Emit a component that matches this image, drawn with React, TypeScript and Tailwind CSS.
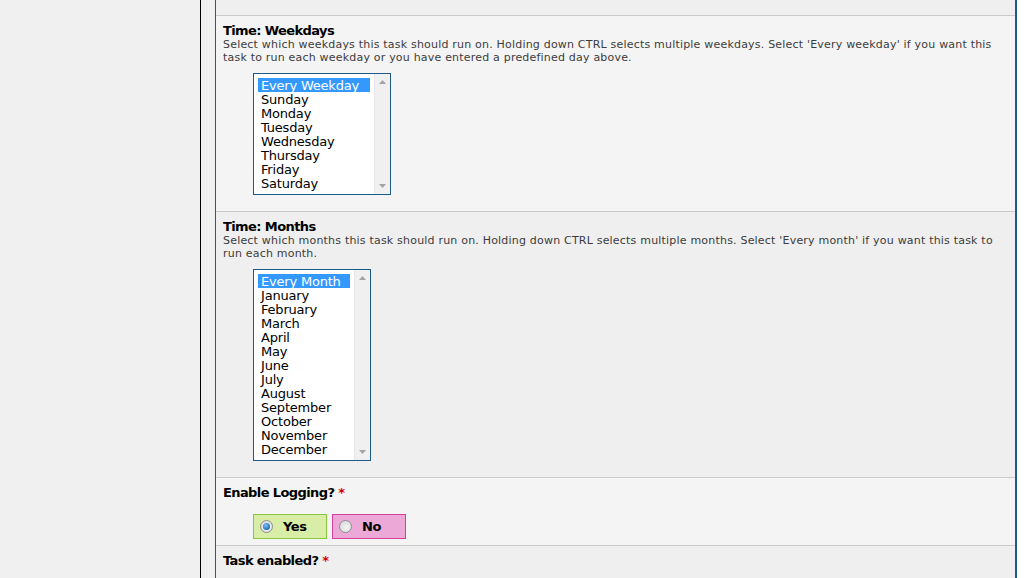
import React from 'react';

const weekdays = ['Every Weekday', 'Sunday', 'Monday', 'Tuesday', 'Wednesday', 'Thursday', 'Friday', 'Saturday'];
const months = [
  'Every Month', 'January', 'February', 'March', 'April', 'May', 'June',
  'July', 'August', 'September', 'October', 'November', 'December',
];

// Listbox drawn by hand so the old Windows look stays put
function ListBox({ items, itemWidth }: { items: string[]; itemWidth: string }) {
  return (
    <div className="ml-[30px] mt-[9px] flex w-fit border border-[#1c5a8a] bg-white">
      <div className="p-1">
        {items.map((it, i) => (
          <div
            key={it}
            className={`${itemWidth} h-[14px] pl-[3px] text-[13px] leading-[15px] tracking-[-0.2px] whitespace-nowrap ${
              i === 0 ? 'bg-[#3399ff] text-white' : 'text-black'
            }`}
          >
            {it}
          </div>
        ))}
      </div>
      <div className="flex w-4 flex-col items-center justify-between border-l border-[#e6e6e6] bg-[#f0f0f0] py-[6px]">
        <svg width="7" height="4" viewBox="0 0 7 4">
          <path d="M0 4 L3.5 0 L7 4 Z" fill="#a3a3a3" />
        </svg>
        <svg width="7" height="4" viewBox="0 0 7 4">
          <path d="M0 0 L3.5 4 L7 0 Z" fill="#a3a3a3" />
        </svg>
      </div>
    </div>
  );
}

function Radio({ checked }: { checked: boolean }) {
  return (
    <span className="flex h-[13px] w-[13px] items-center justify-center rounded-full border border-[#8e8f8f] bg-[radial-gradient(circle_at_60%_60%,#f4f4f4,#d4d4d4)]">
      {checked && (
        <span className="h-[7px] w-[7px] rounded-full bg-[radial-gradient(circle_at_40%_35%,#7ec4f5,#1f6fb1_70%,#0f4f86)]" />
      )}
    </span>
  );
}

function Label({ text, required }: { text: string; required?: boolean }) {
  return (
    <div className="text-[13px] leading-[15px] font-bold tracking-[-0.6px] text-black">
      {text}
      {required && <span className="text-[#d40000]"> *</span>}
    </div>
  );
}

export default function App() {
  return (
    <div
      className="flex h-[578px] w-[1032px] overflow-hidden bg-white"
      style={{ fontFamily: '"DejaVu Sans", Verdana, sans-serif' }}
    >
      <div className="w-[200px] shrink-0 bg-[#f0f0f0]" />
      <div className="w-px shrink-0 bg-black" />
      <div className="w-[14px] shrink-0 bg-[#f0f0f0]" />

      <div className="flex w-[802px] shrink-0 flex-col border-l border-r-2 border-[#1a5d8f]">
        <div className="h-[16px] shrink-0 border-b border-[#cacaca] bg-[#efefef]" />

        <div className="shrink-0 border-b border-[#cacaca] bg-[#f4f4f4] pt-[7px] pb-[16px] pl-[7px]">
          <Label text="Time: Weekdays" />
          <div className="text-[11px] leading-[13px] tracking-[0.2px] whitespace-nowrap text-[#3c3c3c]">
            Select which weekdays this task should run on. Holding down CTRL selects multiple weekdays. Select 'Every weekday' if you want this
            <br />
            task to run each weekday or you have entered a predefined day above.
          </div>
          <ListBox items={weekdays} itemWidth="w-[112px]" />
        </div>

        <div className="shrink-0 border-b border-[#cacaca] bg-[#efefef] pt-[7px] pb-[16px] pl-[7px]">
          <Label text="Time: Months" />
          <div className="text-[11px] leading-[13px] tracking-[0.2px] whitespace-nowrap text-[#3c3c3c]">
            Select which months this task should run on. Holding down CTRL selects multiple months. Select 'Every month' if you want this task to
            <br />
            run each month.
          </div>
          <ListBox items={months} itemWidth="w-[92px]" />
        </div>

        <div className="shrink-0 border-b border-[#cacaca] bg-[#f4f4f4] pt-[7px] pb-[6px] pl-[7px]">
          <Label text="Enable Logging?" required />
          <div className="mt-[14px] ml-[30px] flex gap-[5px]">
            <label className="flex h-[25px] w-[74px] items-center border border-[#8cc63f] bg-[#d8eda6] pl-[6px]">
              <Radio checked />
              <span className="ml-[10px] text-[13px] font-bold tracking-[-0.4px] text-black">Yes</span>
            </label>
            <label className="flex h-[25px] w-[74px] items-center border border-[#d6409a] bg-[#eca8d6] pl-[6px]">
              <Radio checked={false} />
              <span className="ml-[10px] text-[13px] font-bold tracking-[-0.4px] text-black">No</span>
            </label>
          </div>
        </div>

        <div className="flex-1 bg-[#efefef] pt-[7px] pl-[7px]">
          <Label text="Task enabled?" required />
        </div>
      </div>
    </div>
  );
}
